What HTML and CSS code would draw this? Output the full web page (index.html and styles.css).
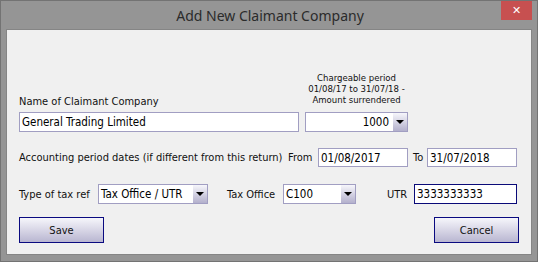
FILE: index.html
```
<!DOCTYPE html>
<html>
<head>
  <link rel="stylesheet" href="styles.css">
</head>
<body>
  <div class="window">
    <div class="titlebar">
      <span></span>
      <span class="title">Add New Claimant Company</span>
      <span class="close-wrap"><span class="close-btn">&#x2715;</span></span>
    </div>

    <div class="content">
      <div class="row row-name">
        <div class="name-col">
          <label class="lbl name-lbl">Name of Claimant Company</label>
          <div class="field name-field">General Trading Limited</div>
        </div>
        <div class="amount-col">
          <div class="small-lbl">Chargeable period<br>01/08/17 to 31/07/18 -<br>Amount surrendered</div>
          <div class="select amount-select">
            <span class="select-val right">1000</span>
            <span class="arrow"></span>
          </div>
        </div>
      </div>

      <div class="row row-dates">
        <span class="lbl acc-lbl">Accounting period dates (if different from this return)</span>
        <span class="lbl from-lbl">From</span>
        <div class="field date-field">01/08/2017</div>
        <span class="lbl to-lbl">To</span>
        <div class="field date-field">31/07/2018</div>
      </div>

      <div class="row row-tax">
        <span class="lbl type-lbl">Type of tax ref</span>
        <div class="select type-select">
          <span class="select-val">Tax Office / UTR</span>
          <span class="arrow"></span>
        </div>
        <span class="lbl office-lbl">Tax Office</span>
        <div class="select office-select">
          <span class="select-val">C100</span>
          <span class="arrow"></span>
        </div>
        <span class="lbl utr-lbl">UTR</span>
        <div class="field utr-field">3333333333</div>
      </div>

      <div class="row row-buttons">
        <button class="btn">Save</button>
        <button class="btn">Cancel</button>
      </div>
    </div>
  </div>
</body>
</html>
```

FILE: styles.css
```
body {
  margin: 0;
  font-family: 'DejaVu Sans Condensed', 'Liberation Sans', sans-serif;
}
.window {
  width: 538px;
  height: 262px;
  box-sizing: border-box;
  background-color: #959595;
  border: 1px solid #737373;
}
.titlebar {
  height: 28px;
  display: grid;
  grid-template-columns: 1fr auto 1fr;
  align-items: start;
}
.title {
  font-family: 'Noto Sans', sans-serif;
  font-size: 14px;
  color: #2b2b2b;
  margin-top: 5px;
  margin-left: 2px;
}
.close-wrap {
  display: flex;
  justify-content: flex-end;
}
.close-btn {
  width: 31px;
  height: 19px;
  margin-right: 5px;
  background-color: #c75050;
  color: white;
  font-family: 'DejaVu Sans', sans-serif;
  font-size: 11px;
  font-weight: bold;
  display: flex;
  align-items: center;
  justify-content: center;
}
.content {
  margin: 0 5px;
  height: 226px;
  box-sizing: border-box;
  border: 1px solid #858585;
  background-color: #f0f0f0;
  padding-left: 12px;
  padding-top: 1px;
}
.row {
  display: flex;
  align-items: center;
}
.lbl {
  font-size: 11px;
  color: #111;
  white-space: nowrap;
}
.field, .select {
  box-sizing: border-box;
  background-color: white;
  border: 1px solid #a19ec2;
  font-size: 11.5px;
  color: #000;
  display: flex;
  align-items: center;
}
.field {
  padding-left: 2px;
}
.row-name {
  align-items: flex-end;
}
.name-col {
  width: 280px;
}
.name-lbl {
  display: block;
  margin-bottom: 4px;
}
.name-field {
  height: 20px;
}
.amount-col {
  width: 103px;
  margin-left: 6px;
}
.small-lbl {
  font-size: 9.5px;
  line-height: 11px;
  text-align: center;
  color: #111;
  padding-top: 41px;
  margin-bottom: 7px;
}
.select {
  height: 20px;
}
.select-val {
  flex: 1;
  padding-left: 2px;
}
.select-val.right {
  text-align: right;
  padding-right: 4px;
}
.arrow {
  width: 14px;
  align-self: stretch;
  background: linear-gradient(#f6f6fb, #b3b0cc);
  display: flex;
  align-items: center;
  justify-content: center;
}
.arrow::after {
  content: "";
  border-left: 4px solid transparent;
  border-right: 4px solid transparent;
  border-top: 4px solid #000;
}
.row-dates {
  margin-top: 16px;
}
.acc-lbl {
  width: 269px;
}
.from-lbl {
  width: 30px;
}
.date-field {
  width: 90px;
  height: 19px;
}
.to-lbl {
  width: 14px;
  margin-left: 5px;
}
.row-tax {
  margin-top: 17px;
}
.type-lbl {
  width: 79px;
}
.type-select {
  width: 110px;
}
.office-lbl {
  width: 56px;
  margin-left: 19px;
}
.office-select {
  width: 73px;
}
.utr-lbl {
  width: 27px;
  margin-left: 31px;
}
.utr-field {
  width: 103px;
  height: 20px;
  border-color: #0a0a78;
}
.row-buttons {
  margin-top: 13px;
  justify-content: space-between;
  padding-right: 12px;
}
.btn {
  width: 85px;
  height: 26px;
  box-sizing: border-box;
  border: 1px solid #0a0a80;
  background: linear-gradient(#f6f6fb, #b9b6d1);
  font-family: 'DejaVu Sans Condensed', 'Liberation Sans', sans-serif;
  font-size: 11px;
  color: #111;
  padding: 0;
}
```
